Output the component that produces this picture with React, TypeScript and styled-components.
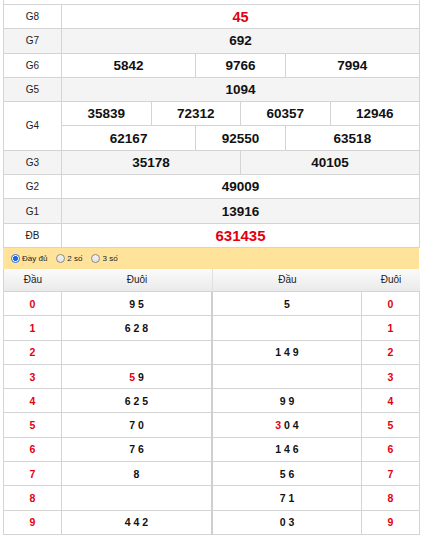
import React from "react";
import styled, { createGlobalStyle, css } from "styled-components";

const Global = createGlobalStyle`
  html, body { margin: 0; padding: 0; background: #fff; }
  body { font-family: "Liberation Sans", Arial, sans-serif; color: #111; }
`;

const BORDER = "#d4d4d4";
const RED = "#e3000f";

const Page = styled.div`
  width: 417px;
  padding-left: 3px;
`;

const TopStrip = styled.div`
  height: 4px;
  border-left: 1px solid ${BORDER};
  border-right: 1px solid ${BORDER};
`;

const Results = styled.div`
  display: grid;
  grid-template-columns: 58px repeat(8, 1fr);
  grid-auto-rows: 24.3px;
  border-top: 1px solid ${BORDER};
  border-left: 1px solid ${BORDER};
`;

const Label = styled.div<{ $alt?: boolean; $rows?: number }>`
  grid-column: 1;
  ${(p) => p.$rows && css`grid-row: span ${p.$rows};`}
  display: flex;
  align-items: center;
  justify-content: center;
  box-sizing: border-box;
  border-right: 1px solid ${BORDER};
  border-bottom: 1px solid ${BORDER};
  background: ${(p) => (p.$alt ? "#f4f4f4" : "#fff")};
  font-size: 10px;
  color: #222;
`;

const Num = styled.div<{ $alt?: boolean; $span: number; $red?: boolean; $big?: boolean }>`
  grid-column: span ${(p) => p.$span};
  display: flex;
  align-items: center;
  justify-content: center;
  box-sizing: border-box;
  border-right: 1px solid ${BORDER};
  border-bottom: 1px solid ${BORDER};
  background: ${(p) => (p.$alt ? "#f4f4f4" : "#fff")};
  font-weight: bold;
  font-size: ${(p) => (p.$big ? "15px" : "13.5px")};
  color: ${(p) => (p.$red ? RED : "#111")};
`;

const OptionBar = styled.div`
  height: 21px;
  width: 416px;
  background: #ffe39b;
  display: flex;
  align-items: center;
  padding-left: 8px;
  box-sizing: border-box;
  gap: 4px;
`;

const Option = styled.label`
  display: flex;
  align-items: center;
  gap: 1px;
  font-size: 8px;
  color: #222;
  margin-right: 5px;
`;

const Radio = styled.span<{ $on?: boolean }>`
  width: 9px;
  height: 9px;
  border-radius: 50%;
  box-sizing: border-box;
  border: 1px solid ${(p) => (p.$on ? "#2a6fd6" : "#8a8a8a")};
  background: ${(p) =>
    p.$on
      ? "radial-gradient(circle, #1f66d6 0 2.2px, #fff 2.7px)"
      : "linear-gradient(#f4f4f4, #e2e2e2)"};
  margin-right: 1px;
`;

const Loto = styled.div`
  display: grid;
  grid-template-columns: 58px 151px 149px 58px;
  grid-template-rows: 23px;
  grid-auto-rows: 24.3px;
  border-left: 1px solid ${BORDER};
`;

const Head = styled.div<{ $divider?: boolean }>`
  display: flex;
  align-items: center;
  justify-content: center;
  box-sizing: border-box;
  background: linear-gradient(#fbfbfb, #eaeaea);
  border-bottom: 1px solid ${BORDER};
  border-right: ${(p) => (p.$divider ? `1px solid #e0e0e0` : "none")};
  font-size: 10px;
  color: #222;
  &:last-child { border-right: 1px solid ${BORDER}; }
`;

const Cell = styled.div<{ $head?: boolean; $thick?: boolean }>`
  display: flex;
  align-items: center;
  justify-content: center;
  box-sizing: border-box;
  border-bottom: 1px solid ${BORDER};
  border-right: ${(p) => (p.$thick ? "2px" : "1px")} solid ${(p) => (p.$thick ? "#cfcfcf" : BORDER)};
  font-weight: bold;
  font-size: 10.5px;
  color: ${(p) => (p.$head ? RED : "#111")};
  white-space: pre;
`;

const Red = styled.span`
  color: ${RED};
`;

type Part = string | { red: string };

const renderParts = (parts: Part[]) =>
  parts.map((p, i) => (typeof p === "string" ? <React.Fragment key={i}>{p}</React.Fragment> : <Red key={i}>{p.red}</Red>));

const lotoLeft: Part[][] = [
  ["9 5"],
  ["6 2 8"],
  [""],
  [{ red: "5" }, " 9"],
  ["6 2 5"],
  ["7 0"],
  ["7 6"],
  ["8"],
  [""],
  ["4 4 2"],
];

const lotoRight: Part[][] = [
  ["5"],
  [""],
  ["1 4 9"],
  [""],
  ["9 9"],
  [{ red: "3" }, " 0 4"],
  ["1 4 6"],
  ["5 6"],
  ["7 1"],
  ["0 3"],
];

export default function App() {
  return (
    <Page>
      <Global />
      <TopStrip />
      <Results>
        <Label>G8</Label>
        <Num $span={8} $red $big={false} style={{ fontSize: "14.5px" }}>45</Num>

        <Label $alt>G7</Label>
        <Num $span={8} $alt>692</Num>

        <Label>G6</Label>
        <Num $span={3}>5842</Num>
        <Num $span={2}>9766</Num>
        <Num $span={3}>7994</Num>

        <Label $alt>G5</Label>
        <Num $span={8} $alt>1094</Num>

        <Label $rows={2}>G4</Label>
        <Num $span={2}>35839</Num>
        <Num $span={2}>72312</Num>
        <Num $span={2}>60357</Num>
        <Num $span={2}>12946</Num>
        <Num $span={3}>62167</Num>
        <Num $span={2}>92550</Num>
        <Num $span={3}>63518</Num>

        <Label $alt>G3</Label>
        <Num $span={4} $alt>35178</Num>
        <Num $span={4} $alt>40105</Num>

        <Label>G2</Label>
        <Num $span={8}>49009</Num>

        <Label $alt>G1</Label>
        <Num $span={8} $alt>13916</Num>

        <Label>ĐB</Label>
        <Num $span={8} $red $big>631435</Num>
      </Results>

      <OptionBar>
        <Option><Radio $on />Đầy đủ</Option>
        <Option><Radio />2 số</Option>
        <Option><Radio />3 số</Option>
      </OptionBar>

      <Loto>
        <Head>Đầu</Head>
        <Head $divider>Đuôi</Head>
        <Head>Đầu</Head>
        <Head>Đuôi</Head>
        {lotoLeft.map((l, i) => (
          <React.Fragment key={i}>
            <Cell $head>{i}</Cell>
            <Cell $thick>{renderParts(l)}</Cell>
            <Cell>{renderParts(lotoRight[i])}</Cell>
            <Cell $head>{i}</Cell>
          </React.Fragment>
        ))}
      </Loto>
    </Page>
  );
}
